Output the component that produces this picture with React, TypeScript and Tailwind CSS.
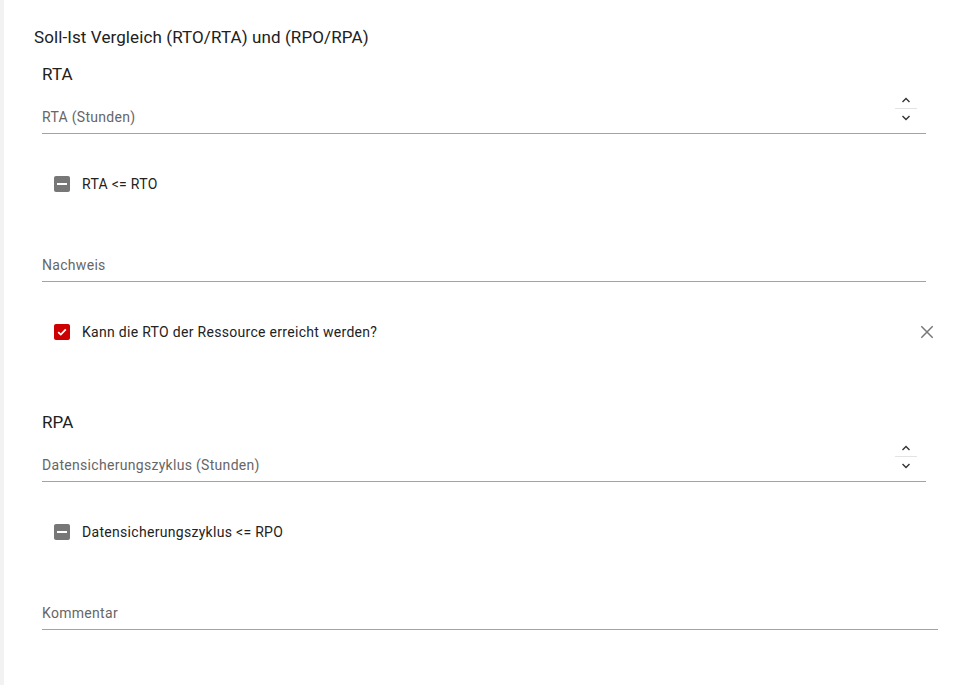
import React from "react";

const font = { fontFamily: "Roboto, 'Liberation Sans', sans-serif" };

function Spinner() {
  return (
    <div className="flex flex-col items-center w-[22px]">
      <div className="h-[16px] flex items-center justify-center">
        <svg width="10" height="6" viewBox="0 0 10 6">
          <path d="M1.5 5 L5 1.5 L8.5 5" fill="none" stroke="#333" strokeWidth="1.4" />
        </svg>
      </div>
      <div className="h-px w-[22px] bg-[#e3e3e3]" />
      <div className="h-[18px] flex items-center justify-center">
        <svg width="10" height="6" viewBox="0 0 10 6">
          <path d="M1.5 1 L5 4.5 L8.5 1" fill="none" stroke="#333" strokeWidth="1.4" />
        </svg>
      </div>
    </div>
  );
}

function Field({ label, spinner, wide }: { label: string; spinner?: boolean; wide?: boolean }) {
  return (
    <div
      className={
        "flex h-[27px] items-start justify-between border-b border-[#a3a3a3] " +
        (wide ? "mr-[37px]" : "mr-[49px]")
      }
    >
      <div className="h-[20px] flex items-end">
        <span className="text-[14px] leading-[20px] tracking-[0.3px] text-[#666666]">{label}</span>
      </div>
      {spinner && (
        <div className="mr-[9px] h-[20px] flex items-end">
          <Spinner />
        </div>
      )}
    </div>
  );
}

function Indeterminate() {
  return (
    <div className="w-[16px] h-[16px] rounded-[2px] bg-[#777777] flex items-center justify-center">
      <div className="w-[10px] h-[2px] bg-white" />
    </div>
  );
}

function Checked() {
  return (
    <div className="w-[16px] h-[16px] rounded-[2px] bg-[#cc0000] flex items-center justify-center">
      <svg width="12" height="12" viewBox="0 0 12 12">
        <path d="M2.2 6.2 L4.8 8.6 L9.8 3.4" fill="none" stroke="#fff" strokeWidth="1.8" />
      </svg>
    </div>
  );
}

function CheckRow({
  label,
  checked,
  clear,
}: {
  label: string;
  checked?: boolean;
  clear?: boolean;
}) {
  return (
    <div className="flex items-center h-[24px] pl-[12px] mr-[37px] justify-between">
      <div className="flex items-center gap-[12px]">
        {checked ? <Checked /> : <Indeterminate />}
        <span className="text-[14px] leading-[20px] tracking-[0.3px] text-[#222222]">{label}</span>
      </div>
      {clear && (
        <div className="w-[20px] h-[20px] mr-[1px] flex items-center justify-center">
          <svg width="14" height="14" viewBox="0 0 14 14">
            <path d="M1.3 1.3 L12.7 12.7 M12.7 1.3 L1.3 12.7" stroke="#777" strokeWidth="1.5" />
          </svg>
        </div>
      )}
    </div>
  );
}

export default function App() {
  return (
    <div className="flex w-full h-[685px] bg-white" style={font}>
      <div className="w-[4px] bg-[#f2f2f2]" />
      <div className="flex-1 flex flex-col">
        <div className="pl-[30px] pt-[25px] text-[17px] leading-[24px] tracking-[0.1px] text-[#212121]">
          Soll-Ist Vergleich (RTO/RTA) und (RPO/RPA)
        </div>
        <div className="pl-[38px] flex flex-col">
          <div className="mt-[13px] text-[17px] leading-[24px] tracking-[0.1px] text-[#212121]">RTA</div>
          <div className="mt-[21px]">
            <Field label="RTA (Stunden)" spinner />
          </div>
          <div className="mt-[38px]">
            <CheckRow label="RTA <= RTO" />
          </div>
          <div className="mt-[59px]">
            <Field label="Nachweis" />
          </div>
          <div className="mt-[38px]">
            <CheckRow label="Kann die RTO der Ressource erreicht werden?" checked clear />
          </div>
          <div className="mt-[66px] text-[17px] leading-[24px] tracking-[0.1px] text-[#212121]">RPA</div>
          <div className="mt-[21px]">
            <Field label="Datensicherungszyklus (Stunden)" spinner />
          </div>
          <div className="mt-[38px]">
            <CheckRow label="Datensicherungszyklus <= RPO" />
          </div>
          <div className="mt-[59px]">
            <Field label="Kommentar" wide />
          </div>
        </div>
      </div>
    </div>
  );
}
